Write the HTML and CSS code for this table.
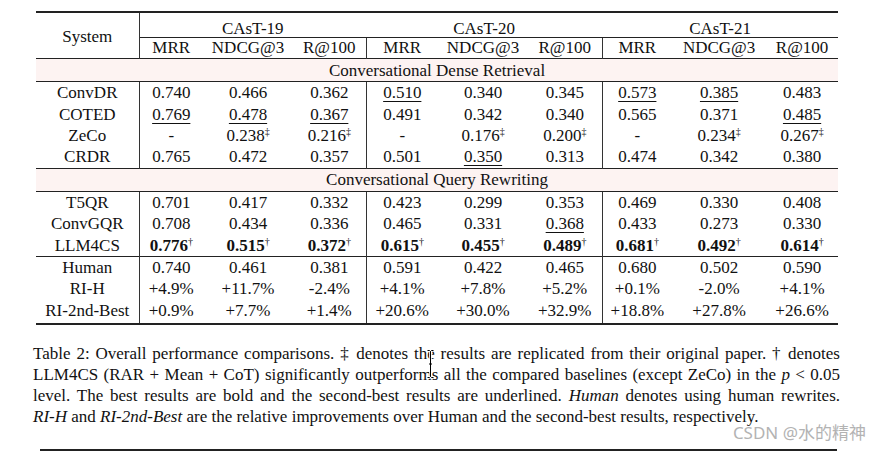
FILE: index.html
```html
<!DOCTYPE html>
<html>
<head>
<meta charset="utf-8">
<link rel="stylesheet" href="styles.css">
</head>
<body>
<div class="page">
  <table class="results">
    <colgroup>
      <col class="c-sys"><col class="c-64"><col class="c-90"><col class="c-73">
      <col class="c-72"><col class="c-90"><col class="c-74">
      <col class="c-70"><col class="c-94"><col class="c-72">
    </colgroup>
    <thead>
      <tr class="h1">
        <th rowspan="2" class="sys vr">System</th>
        <th colspan="3" class="grp">CAsT-19</th>
        <th colspan="3" class="grp">CAsT-20</th>
        <th colspan="3" class="grp">CAsT-21</th>
      </tr>
      <tr class="h2">
        <th>MRR</th><th>NDCG@3</th><th class="vr">R@100</th>
        <th>MRR</th><th>NDCG@3</th><th class="vr">R@100</th>
        <th>MRR</th><th>NDCG@3</th><th>R@100</th>
      </tr>
    </thead>
    <tbody>
      <tr class="sec"><td colspan="10">Conversational Dense Retrieval</td></tr>
      <tr class="first">
        <td class="vr">ConvDR</td>
        <td>0.740</td><td>0.466</td><td class="vr">0.362</td>
        <td><u>0.510</u></td><td>0.340</td><td class="vr">0.345</td>
        <td><u>0.573</u></td><td><u>0.385</u></td><td>0.483</td>
      </tr>
      <tr>
        <td class="vr">COTED</td>
        <td><u>0.769</u></td><td><u>0.478</u></td><td class="vr"><u>0.367</u></td>
        <td>0.491</td><td>0.342</td><td class="vr">0.340</td>
        <td>0.565</td><td>0.371</td><td><u>0.485</u></td>
      </tr>
      <tr>
        <td class="vr">ZeCo</td>
        <td>-</td><td>0.238<sup>‡</sup></td><td class="vr">0.216<sup>‡</sup></td>
        <td>-</td><td>0.176<sup>‡</sup></td><td class="vr">0.200<sup>‡</sup></td>
        <td>-</td><td>0.234<sup>‡</sup></td><td>0.267<sup>‡</sup></td>
      </tr>
      <tr>
        <td class="vr">CRDR</td>
        <td>0.765</td><td>0.472</td><td class="vr">0.357</td>
        <td>0.501</td><td><u>0.350</u></td><td class="vr">0.313</td>
        <td>0.474</td><td>0.342</td><td>0.380</td>
      </tr>
      <tr class="sec"><td colspan="10">Conversational Query Rewriting</td></tr>
      <tr>
        <td class="vr">T5QR</td>
        <td>0.701</td><td>0.417</td><td class="vr">0.332</td>
        <td>0.423</td><td>0.299</td><td class="vr">0.353</td>
        <td>0.469</td><td>0.330</td><td>0.408</td>
      </tr>
      <tr>
        <td class="vr">ConvGQR</td>
        <td>0.708</td><td>0.434</td><td class="vr">0.336</td>
        <td>0.465</td><td>0.331</td><td class="vr"><u>0.368</u></td>
        <td>0.433</td><td>0.273</td><td>0.330</td>
      </tr>
      <tr>
        <td class="vr">LLM4CS</td>
        <td><b>0.776</b><sup>†</sup></td><td><b>0.515</b><sup>†</sup></td><td class="vr"><b>0.372</b><sup>†</sup></td>
        <td><b>0.615</b><sup>†</sup></td><td><b>0.455</b><sup>†</sup></td><td class="vr"><b>0.489</b><sup>†</sup></td>
        <td><b>0.681</b><sup>†</sup></td><td><b>0.492</b><sup>†</sup></td><td><b>0.614</b><sup>†</sup></td>
      </tr>
      <tr class="split">
        <td class="vr">Human</td>
        <td>0.740</td><td>0.461</td><td class="vr">0.381</td>
        <td>0.591</td><td>0.422</td><td class="vr">0.465</td>
        <td>0.680</td><td>0.502</td><td>0.590</td>
      </tr>
      <tr>
        <td class="vr">RI-H</td>
        <td>+4.9%</td><td>+11.7%</td><td class="vr">-2.4%</td>
        <td>+4.1%</td><td>+7.8%</td><td class="vr">+5.2%</td>
        <td>+0.1%</td><td>-2.0%</td><td>+4.1%</td>
      </tr>
      <tr class="last">
        <td class="vr">RI-2nd-Best</td>
        <td>+0.9%</td><td>+7.7%</td><td class="vr">+1.4%</td>
        <td>+20.6%</td><td>+30.0%</td><td class="vr">+32.9%</td>
        <td>+18.8%</td><td>+27.8%</td><td>+26.6%</td>
      </tr>
    </tbody>
  </table>

  <div class="caption">
    <div class="ln">Table 2: Overall performance comparisons. ‡ denotes the results are replicated from their original paper. † denotes</div>
    <div class="ln">LLM4CS (RAR + Mean + CoT) significantly outperforms all the compared baselines (except ZeCo) in the <i>p</i> &lt; 0.05</div>
    <div class="ln">level. The best results are bold and the second-best results are underlined. <i>Human</i> denotes using human rewrites.</div>
    <div class="ln end"><i>RI-H</i> and <i>RI-2nd-Best</i> are the relative improvements over Human and the second-best results, respectively.</div>
  </div>

  <div class="rule"></div>

  <div class="watermark">CSDN @水的精神</div>
  <svg class="cursor" width="9" height="30" viewBox="0 0 9 30">
    <path d="M1.5 1.5 h2 l1 1 l1 -1 h2 M4.5 2.5 v25 M3 15 h3 M1.5 28.5 h2 l1 -1 l1 1 h2" fill="none" stroke="#fff" stroke-width="2.6"/>
    <path d="M1.5 1.5 h2 l1 1 l1 -1 h2 M4.5 2.5 v25 M3 15 h3 M1.5 28.5 h2 l1 -1 l1 1 h2" fill="none" stroke="#000" stroke-width="1"/>
  </svg>
</div>
</body>
</html>
```
FILE: styles.css
```css
html, body {
  margin: 0;
  padding: 0;
  background: #ffffff;
}

.page {
  position: relative;
  width: 881px;
  height: 452px;
  overflow: hidden;
  padding-top: 11px;
  box-sizing: border-box;
  font-family: "Liberation Serif", "Times New Roman", serif;
  color: #111;
}

.results {
  margin-left: 36px;
  width: 802px;
  table-layout: fixed;
  border-collapse: collapse;
  border-top: 2px solid #222;
  border-bottom: 2px solid #222;
  font-size: 17px;
}

.c-sys { width: 103px; }
.c-64 { width: 64px; }
.c-90 { width: 90px; }
.c-73 { width: 73px; }
.c-72 { width: 72px; }
.c-74 { width: 74px; }
.c-70 { width: 70px; }
.c-94 { width: 94px; }

.results th,
.results td {
  padding: 0;
  text-align: center;
  font-weight: normal;
  white-space: nowrap;
  line-height: 21px;
}

.results .vr {
  border-right: 1px solid #333;
}

.h1 th {
  height: 24px;
  line-height: 17px;
  vertical-align: bottom;
  padding-bottom: 0;
}

.h1 th.sys {
  vertical-align: middle;
  line-height: 21px;
  padding-top: 2px;
}

.h1 th.grp {
  border-bottom: 1px solid #222;
}

.h2 th {
  height: 20px;
  line-height: 20px;
  padding-bottom: 0;
}

.sec td {
  background: #fdf3f2;
  border-top: 1px solid #222;
  border-bottom: 1px solid #222;
  height: 21px;
  line-height: 21px;
}

.results tbody tr td {
  height: 21.4px;
}

.results tr.sec td {
  height: 22px;
}

.split td {
  border-top: 1px solid #222;
}

.last td {
  padding-bottom: 2px;
}

.results u {
  text-decoration: underline;
  text-decoration-thickness: 1px;
  text-underline-offset: 3px;
}

.results b {
  font-weight: bold;
}

.results sup {
  font-size: 10px;
  line-height: 0;
  vertical-align: 6px;
  font-weight: normal;
}

.caption {
  margin-top: 18px;
  margin-left: 33px;
  width: 807px;
  font-size: 17px;
  line-height: 21px;
}

.caption .ln {
  text-align: justify;
  text-align-last: justify;
  white-space: nowrap;
}

.caption .ln.end {
  text-align-last: left;
}

.rule {
  margin-top: 22px;
  margin-left: 40px;
  width: 797px;
  height: 2px;
  background: #222;
}

.watermark {
  position: absolute;
  right: 15px;
  top: 423px;
  font-family: "Noto Sans", "Noto Sans CJK SC", sans-serif;
  font-size: 17px;
  line-height: 20px;
  color: #b3b3b3;
}

.cursor {
  position: absolute;
  left: 426px;
  top: 349px;
}
```
